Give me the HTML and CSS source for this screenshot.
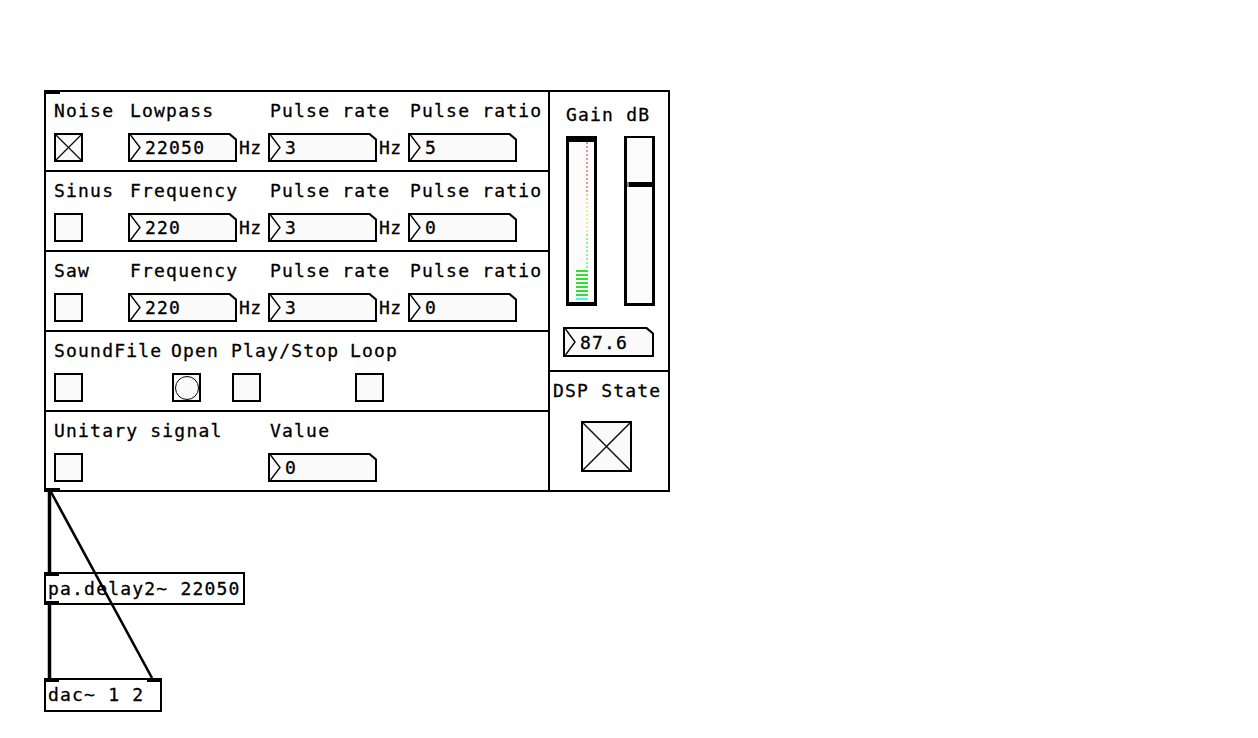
FILE: index.html
```html
<!DOCTYPE html>
<html>
<head>
<meta charset="utf-8">
<link rel="stylesheet" href="styles.css">
</head>
<body>
<div class="canvas">
  <div class="gop">
    <span class="iolet io-tl"></span>
    <span class="iolet io-bl"></span>
    <div class="rows">
      <div class="row">
        <div class="cell w-first"><div class="lbl">Noise</div><div class="ctl"><div class="tgl"><svg class="x" viewBox="0 0 25 25" preserveAspectRatio="none"><line x1="0" y1="0" x2="25" y2="25"/><line x1="25" y1="0" x2="0" y2="25"/></svg></div></div></div>
        <div class="cell w-num"><div class="lbl pl">Lowpass</div><div class="ctl"><div class="nbox"><div class="nin"><svg class="tri" viewBox="0 0 11 25" preserveAspectRatio="none"><polyline points="0.5,0 10,12.5 0.5,25"/></svg><span class="val">22050</span></div></div><span class="hz">Hz</span></div></div>
        <div class="cell w-num"><div class="lbl pl">Pulse rate</div><div class="ctl"><div class="nbox"><div class="nin"><svg class="tri" viewBox="0 0 11 25" preserveAspectRatio="none"><polyline points="0.5,0 10,12.5 0.5,25"/></svg><span class="val">3</span></div></div><span class="hz">Hz</span></div></div>
        <div class="cell"><div class="lbl pl">Pulse ratio</div><div class="ctl"><div class="nbox"><div class="nin"><svg class="tri" viewBox="0 0 11 25" preserveAspectRatio="none"><polyline points="0.5,0 10,12.5 0.5,25"/></svg><span class="val">5</span></div></div></div></div>
      </div>
      <div class="row">
        <div class="cell w-first"><div class="lbl">Sinus</div><div class="ctl"><div class="tgl"></div></div></div>
        <div class="cell w-num"><div class="lbl pl">Frequency</div><div class="ctl"><div class="nbox"><div class="nin"><svg class="tri" viewBox="0 0 11 25" preserveAspectRatio="none"><polyline points="0.5,0 10,12.5 0.5,25"/></svg><span class="val">220</span></div></div><span class="hz">Hz</span></div></div>
        <div class="cell w-num"><div class="lbl pl">Pulse rate</div><div class="ctl"><div class="nbox"><div class="nin"><svg class="tri" viewBox="0 0 11 25" preserveAspectRatio="none"><polyline points="0.5,0 10,12.5 0.5,25"/></svg><span class="val">3</span></div></div><span class="hz">Hz</span></div></div>
        <div class="cell"><div class="lbl pl">Pulse ratio</div><div class="ctl"><div class="nbox"><div class="nin"><svg class="tri" viewBox="0 0 11 25" preserveAspectRatio="none"><polyline points="0.5,0 10,12.5 0.5,25"/></svg><span class="val">0</span></div></div></div></div>
      </div>
      <div class="row">
        <div class="cell w-first"><div class="lbl">Saw</div><div class="ctl"><div class="tgl"></div></div></div>
        <div class="cell w-num"><div class="lbl pl">Frequency</div><div class="ctl"><div class="nbox"><div class="nin"><svg class="tri" viewBox="0 0 11 25" preserveAspectRatio="none"><polyline points="0.5,0 10,12.5 0.5,25"/></svg><span class="val">220</span></div></div><span class="hz">Hz</span></div></div>
        <div class="cell w-num"><div class="lbl pl">Pulse rate</div><div class="ctl"><div class="nbox"><div class="nin"><svg class="tri" viewBox="0 0 11 25" preserveAspectRatio="none"><polyline points="0.5,0 10,12.5 0.5,25"/></svg><span class="val">3</span></div></div><span class="hz">Hz</span></div></div>
        <div class="cell"><div class="lbl pl">Pulse ratio</div><div class="ctl"><div class="nbox"><div class="nin"><svg class="tri" viewBox="0 0 11 25" preserveAspectRatio="none"><polyline points="0.5,0 10,12.5 0.5,25"/></svg><span class="val">0</span></div></div></div></div>
      </div>
      <div class="row">
        <div class="cell w-sf"><div class="lbl">SoundFile</div><div class="ctl"><div class="tgl"></div></div></div>
        <div class="cell w-open"><div class="lbl">Open</div><div class="ctl ml1"><div class="bng"><div class="circ"></div></div></div></div>
        <div class="cell w-play"><div class="lbl">Play/Stop</div><div class="ctl ml1"><div class="tgl"></div></div></div>
        <div class="cell"><div class="lbl">Loop</div><div class="ctl ml5"><div class="tgl"></div></div></div>
      </div>
      <div class="row last">
        <div class="cell w-uni"><div class="lbl">Unitary signal</div><div class="ctl"><div class="tgl"></div></div></div>
        <div class="cell"><div class="lbl pl">Value</div><div class="ctl"><div class="nbox"><div class="nin"><svg class="tri" viewBox="0 0 11 25" preserveAspectRatio="none"><polyline points="0.5,0 10,12.5 0.5,25"/></svg><span class="val">0</span></div></div></div></div>
      </div>
    </div>
    <div class="side">
      <div class="gain">
        <div class="lbl">Gain dB</div>
        <div class="meters">
          <svg class="vu" width="31" height="170" viewBox="0 0 31 170">
            <rect x="0" y="0" width="31" height="170" fill="#000"/>
            <rect x="3" y="6" width="25" height="160" fill="#fbfbfb"/>
            <g fill="#e27de2"><rect x="20" y="6" width="2" height="2"/></g>
            <g fill="#f39595">
              <rect x="20" y="10" width="2" height="2"/><rect x="20" y="14" width="2" height="2"/><rect x="20" y="18" width="2" height="2"/><rect x="20" y="22" width="2" height="2"/><rect x="20" y="26" width="2" height="2"/><rect x="20" y="30" width="2" height="2"/><rect x="20" y="34" width="2" height="2"/><rect x="20" y="38" width="2" height="2"/><rect x="20" y="42" width="2" height="2"/><rect x="20" y="46" width="2" height="2"/><rect x="20" y="50" width="2" height="2"/><rect x="20" y="54" width="2" height="2"/>
            </g>
            <g fill="#f5c293"><rect x="20" y="58" width="2" height="2"/><rect x="20" y="62" width="2" height="2"/></g>
            <g fill="#ecec8a">
              <rect x="20" y="66" width="2" height="2"/><rect x="20" y="70" width="2" height="2"/><rect x="20" y="74" width="2" height="2"/><rect x="20" y="78" width="2" height="2"/><rect x="20" y="82" width="2" height="2"/><rect x="20" y="86" width="2" height="2"/><rect x="20" y="90" width="2" height="2"/><rect x="20" y="94" width="2" height="2"/>
            </g>
            <g fill="#98ea98">
              <rect x="20" y="98" width="2" height="2"/><rect x="20" y="102" width="2" height="2"/><rect x="20" y="106" width="2" height="2"/><rect x="20" y="110" width="2" height="2"/><rect x="20" y="114" width="2" height="2"/><rect x="20" y="118" width="2" height="2"/><rect x="20" y="122" width="2" height="2"/><rect x="20" y="126" width="2" height="2"/><rect x="20" y="130" width="2" height="2"/>
            </g>
            <g fill="#2fe02f">
              <rect x="10" y="134" width="12" height="2"/><rect x="10" y="138" width="12" height="2"/><rect x="10" y="142" width="12" height="2"/><rect x="10" y="146" width="12" height="2"/><rect x="10" y="150" width="12" height="2"/><rect x="10" y="154" width="12" height="2"/><rect x="10" y="158" width="12" height="2"/>
            </g>
            <rect x="10" y="162" width="12" height="2" fill="#4ef0f0"/>
          </svg>
          <div class="slider"><div class="knob"></div></div>
        </div>
        <div class="nbox gainbox"><div class="nin"><svg class="tri" viewBox="0 0 11 25" preserveAspectRatio="none"><polyline points="0.5,0 10,12.5 0.5,25"/></svg><span class="val">87.6</span></div></div>
      </div>
      <div class="dsp">
        <div class="lbl">DSP State</div>
        <div class="tgl big"><svg class="x" viewBox="0 0 47 47" preserveAspectRatio="none"><line x1="0" y1="0" x2="47" y2="47"/><line x1="47" y1="0" x2="0" y2="47"/></svg></div>
      </div>
    </div>
  </div>

  <div class="obj delay">pa.delay2~ 22050<span class="iolet io-tl"></span><span class="iolet io-bl"></span></div>
  <div class="obj dac">dac~ 1 2<span class="iolet io-tl"></span><span class="iolet io-tr"></span></div>

  <svg class="cables" width="1258" height="738" viewBox="0 0 1258 738">
    <line x1="49.5" y1="492" x2="49.5" y2="572" stroke="#000" stroke-width="3.5"/>
    <line x1="49.5" y1="604" x2="49.5" y2="678" stroke="#000" stroke-width="3.5"/>
    <line x1="51" y1="492" x2="152" y2="678" stroke="#000" stroke-width="2.6"/>
  </svg>
</div>
</body>
</html>
```
FILE: styles.css
```css
html, body {
  margin: 0;
  padding: 0;
  background: #fff;
}
body {
  font-family: "DejaVu Sans Mono", "Liberation Mono", monospace;
  font-size: 18px;
  letter-spacing: 1.2px;
  color: #000;
  -webkit-text-stroke: 0.3px #000;
}
.canvas {
  position: relative;
  width: 1258px;
  height: 738px;
  overflow: hidden;
}
.gop {
  position: absolute;
  left: 44px;
  top: 90px;
  width: 626px;
  height: 402px;
  box-sizing: border-box;
  border: 2px solid #000;
  display: flex;
}
.iolet {
  position: absolute;
  width: 15px;
  height: 4px;
  background: #000;
}
.gop .io-tl { left: -1px; top: -2px; }
.gop .io-bl { left: -1px; bottom: -2px; }

.rows {
  width: 504px;
  box-sizing: border-box;
  border-right: 2px solid #000;
  display: flex;
  flex-direction: column;
}
.row {
  height: 80px;
  box-sizing: border-box;
  border-bottom: 2px solid #000;
  padding: 9px 0 0 8px;
  display: flex;
}
.row.last {
  height: 78px;
  border-bottom: none;
}
.cell {
  display: flex;
  flex-direction: column;
  flex: none;
}
.w-first { width: 74px; }
.w-num { width: 140px; }
.w-sf { width: 117px; }
.w-open { width: 60px; }
.w-play { width: 119px; }
.w-uni { width: 214px; }

.lbl {
  height: 20px;
  line-height: 20px;
  white-space: nowrap;
}
.lbl.pl { padding-left: 2px; }
.ctl {
  margin-top: 12px;
  height: 29px;
  display: flex;
  align-items: center;
}
.ml1 { margin-left: 1px; }
.ml5 { margin-left: 5px; }

.tgl {
  width: 29px;
  height: 29px;
  box-sizing: border-box;
  border: 2px solid #000;
  background: #fafafa;
  flex: none;
}
.tgl .x {
  display: block;
  width: 100%;
  height: 100%;
}
.tgl .x line {
  stroke: #111;
  stroke-width: 1.3;
}
.bng {
  width: 29px;
  height: 29px;
  box-sizing: border-box;
  border: 2px solid #000;
  background: #fafafa;
  display: flex;
  align-items: center;
  justify-content: center;
}
.circ {
  width: 24px;
  height: 24px;
  box-sizing: border-box;
  border: 1.5px solid #000;
  border-radius: 50%;
}

.nbox {
  width: 109px;
  height: 29px;
  box-sizing: border-box;
  padding: 2px;
  background: #000;
  clip-path: polygon(0 0, calc(100% - 7px) 0, 100% 6px, 100% 100%, 0 100%);
  flex: none;
}
.nin {
  height: 100%;
  background: #fafafa;
  clip-path: polygon(0 0, calc(100% - 6px) 0, 100% 5px, 100% 100%, 0 100%);
  display: flex;
  align-items: center;
}
.tri {
  width: 11px;
  height: 25px;
  flex: none;
}
.tri polyline {
  fill: none;
  stroke: #000;
  stroke-width: 1.4;
}
.val {
  margin-left: 4px;
  line-height: 25px;
}
.hz {
  margin-left: 2px;
  letter-spacing: 0.5px;
}

.side {
  flex: 1;
  display: flex;
  flex-direction: column;
}
.gain {
  height: 280px;
  box-sizing: border-box;
  border-bottom: 2px solid #000;
  padding: 13px 0 0 16px;
}
.meters {
  margin-top: 11px;
  display: flex;
  gap: 27px;
}
.vu {
  display: block;
  flex: none;
}
.slider {
  width: 31px;
  height: 170px;
  box-sizing: border-box;
  border: 3px solid #000;
  border-top-width: 2px;
  background: #fbfbfb;
  display: flex;
  flex-direction: column;
}
.knob {
  margin-top: 44px;
  height: 5px;
  background: #000;
  border-left: 2px solid #888;
}
.gainbox {
  width: 91px;
  height: 30px;
  margin: 21px 0 0 -3px;
}
.gainbox .tri { height: 26px; }

.dsp {
  flex: 1;
  padding: 9px 0 0 3px;
}
.tgl.big {
  width: 51px;
  height: 51px;
  margin: 20px 0 0 28px;
}
.tgl.big .x line { stroke-width: 1.5; }

.obj {
  position: absolute;
  box-sizing: border-box;
  border: 2px solid #000;
  background: #fff;
  padding: 0 2px;
  line-height: 29px;
  white-space: nowrap;
}
.delay {
  left: 44px;
  top: 572px;
  width: 201px;
  height: 33px;
}
.dac {
  left: 44px;
  top: 678px;
  width: 118px;
  height: 34px;
}
.obj .io-tl { left: -2px; top: -2px; height: 4px; }
.obj .io-bl { left: -2px; bottom: -2px; height: 4px; }
.obj .io-tr { right: -2px; top: -2px; height: 4px; }
.cables {
  position: absolute;
  left: 0;
  top: 0;
  pointer-events: none;
}
```
